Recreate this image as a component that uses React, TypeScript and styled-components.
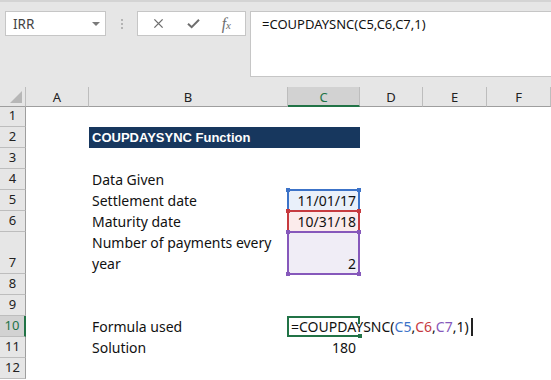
import React from "react"
import styled, { createGlobalStyle, css } from "styled-components"

const GlobalStyle = createGlobalStyle`
  html, body {
    margin: 0;
    padding: 0;
    background: #ffffff;
  }
  body {
    font-family: "Noto Sans", "Open Sans", sans-serif;
    width: 551px;
    height: 380px;
    overflow: hidden;
  }
`

const COLS = "26px 63px 199px 72px 63px 64px 64px"
const ROWS = "20px 20px 21px 21px 21px 21px 21px 42px 21px 21px 21px 21px 21px"

const BLUE = "#3c73c8"
const RED = "#c63a3f"
const PURPLE = "#8658bb"
const GREEN = "#217346"

export default function App() {
  return (
    <Page>
      <GlobalStyle />
      <Toolbar>
        <NameBox>
          <span>IRR</span>
          <Caret />
        </NameBox>
        <Grip>
          <i />
          <i />
          <i />
        </Grip>
        <FxBox>
          <ToolIcon viewBox="0 0 12 12">
            <path d="M1.5 1.5 L10.5 10.5 M10.5 1.5 L1.5 10.5" stroke="#6e6e6e" strokeWidth="1.5" fill="none" />
          </ToolIcon>
          <ToolIcon viewBox="0 0 14 12">
            <path d="M1 6.2 L5 10 L13 2" stroke="#6e6e6e" strokeWidth="2.2" fill="none" />
          </ToolIcon>
          <FxLabel>
            f<sub>x</sub>
          </FxLabel>
        </FxBox>
        <FormulaInput>=COUPDAYSNC(C5,C6,C7,1)</FormulaInput>
      </Toolbar>

      <Sheet>
        <Corner>
          <CornerTriangle />
        </Corner>
        {["A", "B", "C", "D", "E", "F"].map((c) => (
          <ColHead key={c} active={c === "C"}>
            {c}
          </ColHead>
        ))}

        <RowHead>1</RowHead>
        <Blank n={6} />

        <RowHead>2</RowHead>
        <Cell />
        <TitleCell>COUPDAYSYNC Function</TitleCell>
        <Cell />
        <Cell />
        <Cell />

        <RowHead>3</RowHead>
        <Blank n={6} />

        <RowHead>4</RowHead>
        <Cell />
        <Cell>Data Given</Cell>
        <Blank n={4} />

        <RowHead>5</RowHead>
        <Cell />
        <Cell>Settlement date</Cell>
        <Cell right fill="#e9f0fa">
          11/01/17
          <RefBox color={BLUE} />
        </Cell>
        <Blank n={3} />

        <RowHead>6</RowHead>
        <Cell />
        <Cell>Maturity date</Cell>
        <Cell right fill="#fbebeb">
          10/31/18
          <RefBox color={RED} />
        </Cell>
        <Blank n={3} />

        <RowHead>7</RowHead>
        <Cell />
        <WrapCell>Number of payments every year</WrapCell>
        <Cell right fill="#f0edf6">
          2
          <RefBox color={PURPLE} />
        </Cell>
        <Blank n={3} />

        <RowHead>8</RowHead>
        <Blank n={6} />

        <RowHead>9</RowHead>
        <Blank n={6} />

        <RowHead active>10</RowHead>
        <Cell />
        <Cell>Formula used</Cell>
        <EditCell>
          <EditText>
            =COUPDAYSNC(<Ref color={BLUE}>C5</Ref>,<Ref color={RED}>C6</Ref>,
            <Ref color={PURPLE}>C7</Ref>,1)
            <Caretline />
          </EditText>
          <ActiveBox />
        </EditCell>
        <Blank n={3} />

        <RowHead>11</RowHead>
        <Cell />
        <Cell>Solution</Cell>
        <Cell right>180</Cell>
        <Blank n={3} />

        <RowHead>12</RowHead>
        <Blank n={6} />
      </Sheet>
    </Page>
  )
}

const Blank = ({ n }: { n: number }) => (
  <>
    {Array.from({ length: n }).map((_, i) => (
      <Cell key={i} />
    ))}
  </>
)

const RefBox = ({ color }: { color: string }) => (
  <Highlight color={color}>
    <Handle color={color} style={{ left: -3, top: -3 }} />
    <Handle color={color} style={{ right: -3, top: -3 }} />
    <Handle color={color} style={{ left: -3, bottom: -3 }} />
    <Handle color={color} style={{ right: -3, bottom: -3 }} />
  </Highlight>
)

const Page = styled.div`
  width: 551px;
  height: 380px;
  display: flex;
  flex-direction: column;
  overflow: hidden;
`

const Toolbar = styled.div`
  height: 87px;
  flex: none;
  background: #e6e6e6;
  border-top: 2px solid #d4d4d4;
  display: flex;
  align-items: flex-start;
  padding: 9px 0 0 5px;
  box-sizing: border-box;
`

const NameBox = styled.div`
  width: 101px;
  height: 25px;
  box-sizing: border-box;
  background: #ffffff;
  border: 1px solid #c6c6c6;
  display: flex;
  align-items: center;
  justify-content: space-between;
  padding: 0 5px 0 7px;
  font-family: "Noto Sans", sans-serif;
  font-size: 13.5px;
  color: #444444;
`

const Caret = styled.div`
  width: 0;
  height: 0;
  border-left: 4px solid transparent;
  border-right: 4px solid transparent;
  border-top: 4px solid #7a7a7a;
  margin-top: 1px;
`

const Grip = styled.div`
  width: 31px;
  height: 25px;
  display: flex;
  flex-direction: column;
  align-items: center;
  justify-content: center;
  gap: 2px;
  i {
    width: 2px;
    height: 2px;
    background: #b4b4b4;
  }
`

const FxBox = styled.div`
  width: 109px;
  height: 25px;
  box-sizing: border-box;
  background: #ffffff;
  border: 1px solid #c6c6c6;
  display: flex;
  align-items: center;
  justify-content: space-between;
  padding: 0 14px 0 14px;
`

const ToolIcon = styled.svg`
  width: 13px;
  height: 11px;
`

const FxLabel = styled.span`
  font-family: "Liberation Serif", serif;
  font-style: italic;
  font-size: 16px;
  color: #6e6e6e;
  line-height: 1;
  sub {
    font-size: 11px;
    vertical-align: 0;
  }
`

const FormulaInput = styled.div`
  flex: 1;
  margin-left: 4px;
  height: 66px;
  box-sizing: border-box;
  background: #ffffff;
  border: 1px solid #c6c6c6;
  border-right: none;
  padding: 3px 0 0 11px;
  font-family: "Noto Sans", sans-serif;
  font-size: 13px;
  color: #111111;
`

const Sheet = styled.div`
  flex: 1;
  display: grid;
  grid-template-columns: ${COLS};
  grid-template-rows: ${ROWS};
  background: #ffffff;
  font-family: "Noto Sans", sans-serif;
  font-size: 14px;
  color: #111111;
`

const headBase = css`
  background: #e6e6e6;
  color: #222222;
  font-family: "Noto Sans", sans-serif;
  font-size: 13px;
  display: flex;
  box-sizing: border-box;
`

const Corner = styled.div`
  ${headBase};
  position: relative;
  border-right: 1px solid #bdbdbd;
  border-bottom: 1px solid #9e9e9e;
`

const CornerTriangle = styled.div`
  position: absolute;
  right: 3px;
  bottom: 3px;
  width: 0;
  height: 0;
  border-left: 12px solid transparent;
  border-bottom: 12px solid #b7b7b7;
`

const ColHead = styled.div<{ active?: boolean }>`
  ${headBase};
  align-items: center;
  justify-content: center;
  border-right: 1px solid #bdbdbd;
  border-bottom: ${({ active }) => (active ? `2px solid ${GREEN}` : "1px solid #9e9e9e")};
  background: ${({ active }) => (active ? "#d2d2d2" : "#e6e6e6")};
  color: ${({ active }) => (active ? GREEN : "#222222")};
  padding-top: 1px;
`

const RowHead = styled.div<{ active?: boolean }>`
  ${headBase};
  align-items: flex-end;
  justify-content: center;
  padding-bottom: 1px;
  line-height: 19px;
  border-bottom: 1px solid #bdbdbd;
  border-right: ${({ active }) => (active ? `2px solid ${GREEN}` : "1px solid #9e9e9e")};
  background: ${({ active }) => (active ? "#d2d2d2" : "#e6e6e6")};
  color: ${({ active }) => (active ? GREEN : "#222222")};
`

const Cell = styled.div<{ right?: boolean; fill?: string }>`
  position: relative;
  display: flex;
  align-items: flex-end;
  justify-content: ${({ right }) => (right ? "flex-end" : "flex-start")};
  padding: 0 4px 0 3px;
  line-height: 20px;
  white-space: nowrap;
  background: ${({ fill }) => fill || "transparent"};
`

const TitleCell = styled(Cell)`
  grid-column: span 2;
  background: #17375e;
  color: #ffffff;
  font-family: "Liberation Sans", Arial, sans-serif;
  font-weight: bold;
  font-size: 13px;
  align-items: center;
`

const WrapCell = styled(Cell)`
  white-space: normal;
  line-height: 21px;
  padding-bottom: 0;
`

const EditCell = styled(Cell)`
  overflow: visible;
  z-index: 1;
`

const EditText = styled.span`
  flex: none;
  display: inline-flex;
  align-items: flex-end;
  white-space: pre;
`

const Ref = styled.span<{ color: string }>`
  color: ${({ color }) => color};
`

const Caretline = styled.span`
  flex: none;
  display: inline-block;
  width: 2px;
  height: 18px;
  background: #222222;
  margin-left: 2px;
  margin-bottom: 1px;
`

const Highlight = styled.div<{ color: string }>`
  position: absolute;
  inset: -1px 0 -1px -1px;
  border: 2px solid ${({ color }) => color};
  pointer-events: none;
`

const Handle = styled.div<{ color: string }>`
  position: absolute;
  width: 4px;
  height: 4px;
  background: ${({ color }) => color};
`

const ActiveBox = styled.div`
  position: absolute;
  left: -1px;
  top: 0;
  width: 73px;
  height: 21px;
  box-sizing: border-box;
  border: 2px solid ${GREEN};
  border-right: none;
  pointer-events: none;
  &::after {
    content: "";
    position: absolute;
    right: -2px;
    bottom: -3px;
    width: 4px;
    height: 4px;
    background: ${GREEN};
  }
  &::before {
    content: "";
    position: absolute;
    right: 0;
    top: -2px;
    width: 2px;
    height: 8px;
    background: ${GREEN};
  }
`
